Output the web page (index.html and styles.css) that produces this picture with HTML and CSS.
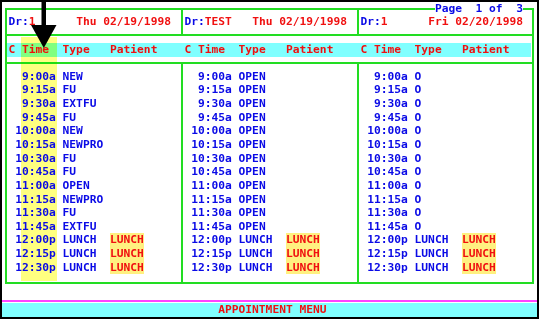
FILE: index.html
```html
<!DOCTYPE html>
<html lang="en">
<head>
    <meta charset="UTF-8">
    <meta name="viewport" content="width=device-width, initial-scale=1.0">
    <title>Appointment Menu</title>
    <link rel="stylesheet" href="styles.css">
</head>
<body>
    <div class="screen">
        <!-- highlight behind the Time column -->
        <div class="mark"></div>

        <div class="frame">
            <div class="panes days">
                <div class="pane"><span>Dr:</span><span class="red">1      Thu 02/19/1998</span></div>
                <div class="pane"><span>Dr:</span><span class="red">TEST   Thu 02/19/1998</span></div>
                <div class="pane"><span>Dr:</span><span class="red">1      Fri 02/20/1998</span></div>
            </div>
            <div class="band-row">
                <div class="panes band">
                    <div class="pane">C Time  Type   Patient</div>
                    <div class="pane">C Time  Type   Patient</div>
                    <div class="pane">C Time  Type   Patient</div>
                </div>
            </div>
            <div class="panes slots" id="slots">
                <div class="pane"></div>
                <div class="pane"></div>
                <div class="pane"></div>
            </div>
        </div>

        <div class="menu">
            <div class="menu-bar">APPOINTMENT MENU</div>
        </div>

        <div class="pager">Page  1 of  3</div>

        <svg class="pointer" width="26" height="49" viewBox="0 0 26 49">
            <rect x="10.5" y="0" width="4.5" height="26" fill="#000"/>
            <polygon points="0,25 25.5,25 12.8,48" fill="#000"/>
        </svg>
    </div>

    <script>
        var times = ['9:00a', '9:15a', '9:30a', '9:45a', '10:00a', '10:15a', '10:30a', '10:45a',
                     '11:00a', '11:15a', '11:30a', '11:45a', '12:00p', '12:15p', '12:30p'];

        var types = [
            ['NEW', 'FU', 'EXTFU', 'FU', 'NEW', 'NEWPRO', 'FU', 'FU', 'OPEN', 'NEWPRO', 'FU', 'EXTFU'],
            ['OPEN', 'OPEN', 'OPEN', 'OPEN', 'OPEN', 'OPEN', 'OPEN', 'OPEN', 'OPEN', 'OPEN', 'OPEN', 'OPEN'],
            ['O', 'O', 'O', 'O', 'O', 'O', 'O', 'O', 'O', 'O', 'O', 'O']
        ];

        function buildSlots() {
            var panes = document.querySelectorAll('#slots .pane');
            for (var p = 0; p < panes.length; p++) {
                for (var i = 0; i < times.length; i++) {
                    var row = document.createElement('div');
                    row.className = 'slot';

                    var time = document.createElement('span');
                    time.className = 'time';
                    time.textContent = times[i];
                    row.appendChild(time);

                    var type = document.createElement('span');
                    type.textContent = types[p][i] || 'LUNCH';
                    row.appendChild(type);

                    // lunch hour is blocked out in the patient column
                    if (!types[p][i]) {
                        var patient = document.createElement('span');
                        patient.className = 'patient';
                        patient.textContent = 'LUNCH';
                        row.appendChild(patient);
                    }
                    panes[p].appendChild(row);
                }
            }
        }

        buildSlots();
    </script>
</body>
</html>
```

FILE: styles.css
```css
body {
    margin: 0;
    background: #fff;
}
.screen {
    position: relative;
    width: 539px;
    height: 319px;
    box-sizing: border-box;
    border: 2px solid #000;
    font-family: "DejaVu Sans Mono", monospace;
    font-weight: bold;
    font-size: 11.25px;
    line-height: 13.64px;
    color: #0a0ae6;
}
.red {
    color: #f01010;
}
.frame {
    width: 529px;
    margin: 6px 0 0 3px;
    box-sizing: border-box;
    border: 2px solid #22dd22;
}
.panes {
    display: grid;
    grid-template-columns: 174px 176px 1fr;
}
.pane {
    padding-left: 1.4px;
    white-space: pre;
    box-sizing: border-box;
}
.pane + .pane {
    border-left: 2px solid #22dd22;
}
.days {
    border-bottom: 2px solid #22dd22;
}
.days .pane {
    height: 24px;
    padding-top: 5.2px;
}
.band-row {
    height: 26px;
    padding-top: 7px;
    box-sizing: border-box;
}
.band {
    height: 13.7px;
    margin-right: 1px;
    background: #80ffff;
    color: #f01010;
}
.band .pane + .pane {
    border-left-color: transparent;
}
.slots {
    border-top: 2px solid #22dd22;
}
.slots .pane {
    /* keep the text above the column highlight */
    position: relative;
    height: 218px;
    padding-top: 5.8px;
}
.slot {
    display: grid;
    grid-template-columns: 7ch 6ch auto;
    column-gap: 1ch;
}
.time {
    text-align: right;
}
.patient {
    justify-self: start;
    background: #fff080;
    color: #f01010;
}
.menu {
    margin-top: 16px;
    padding-top: 1px;
    border-top: 2px solid #ff44ff;
}
.menu-bar {
    height: 14px;
    padding-left: 5.8px;
    line-height: 14px;
    background: #80ffff;
    color: #f01010;
    text-align: center;
    white-space: pre;
}
.pager {
    position: absolute;
    left: 432.9px;
    top: -0.4px;
    background: #fff;
    white-space: pre;
}
.mark {
    position: absolute;
    left: 18.5px;
    top: 35px;
    width: 36.8px;
    height: 244px;
    background: #ffff80;
    mix-blend-mode: multiply;
}
.pointer {
    position: absolute;
    left: 29px;
    top: -2px;
}
```
